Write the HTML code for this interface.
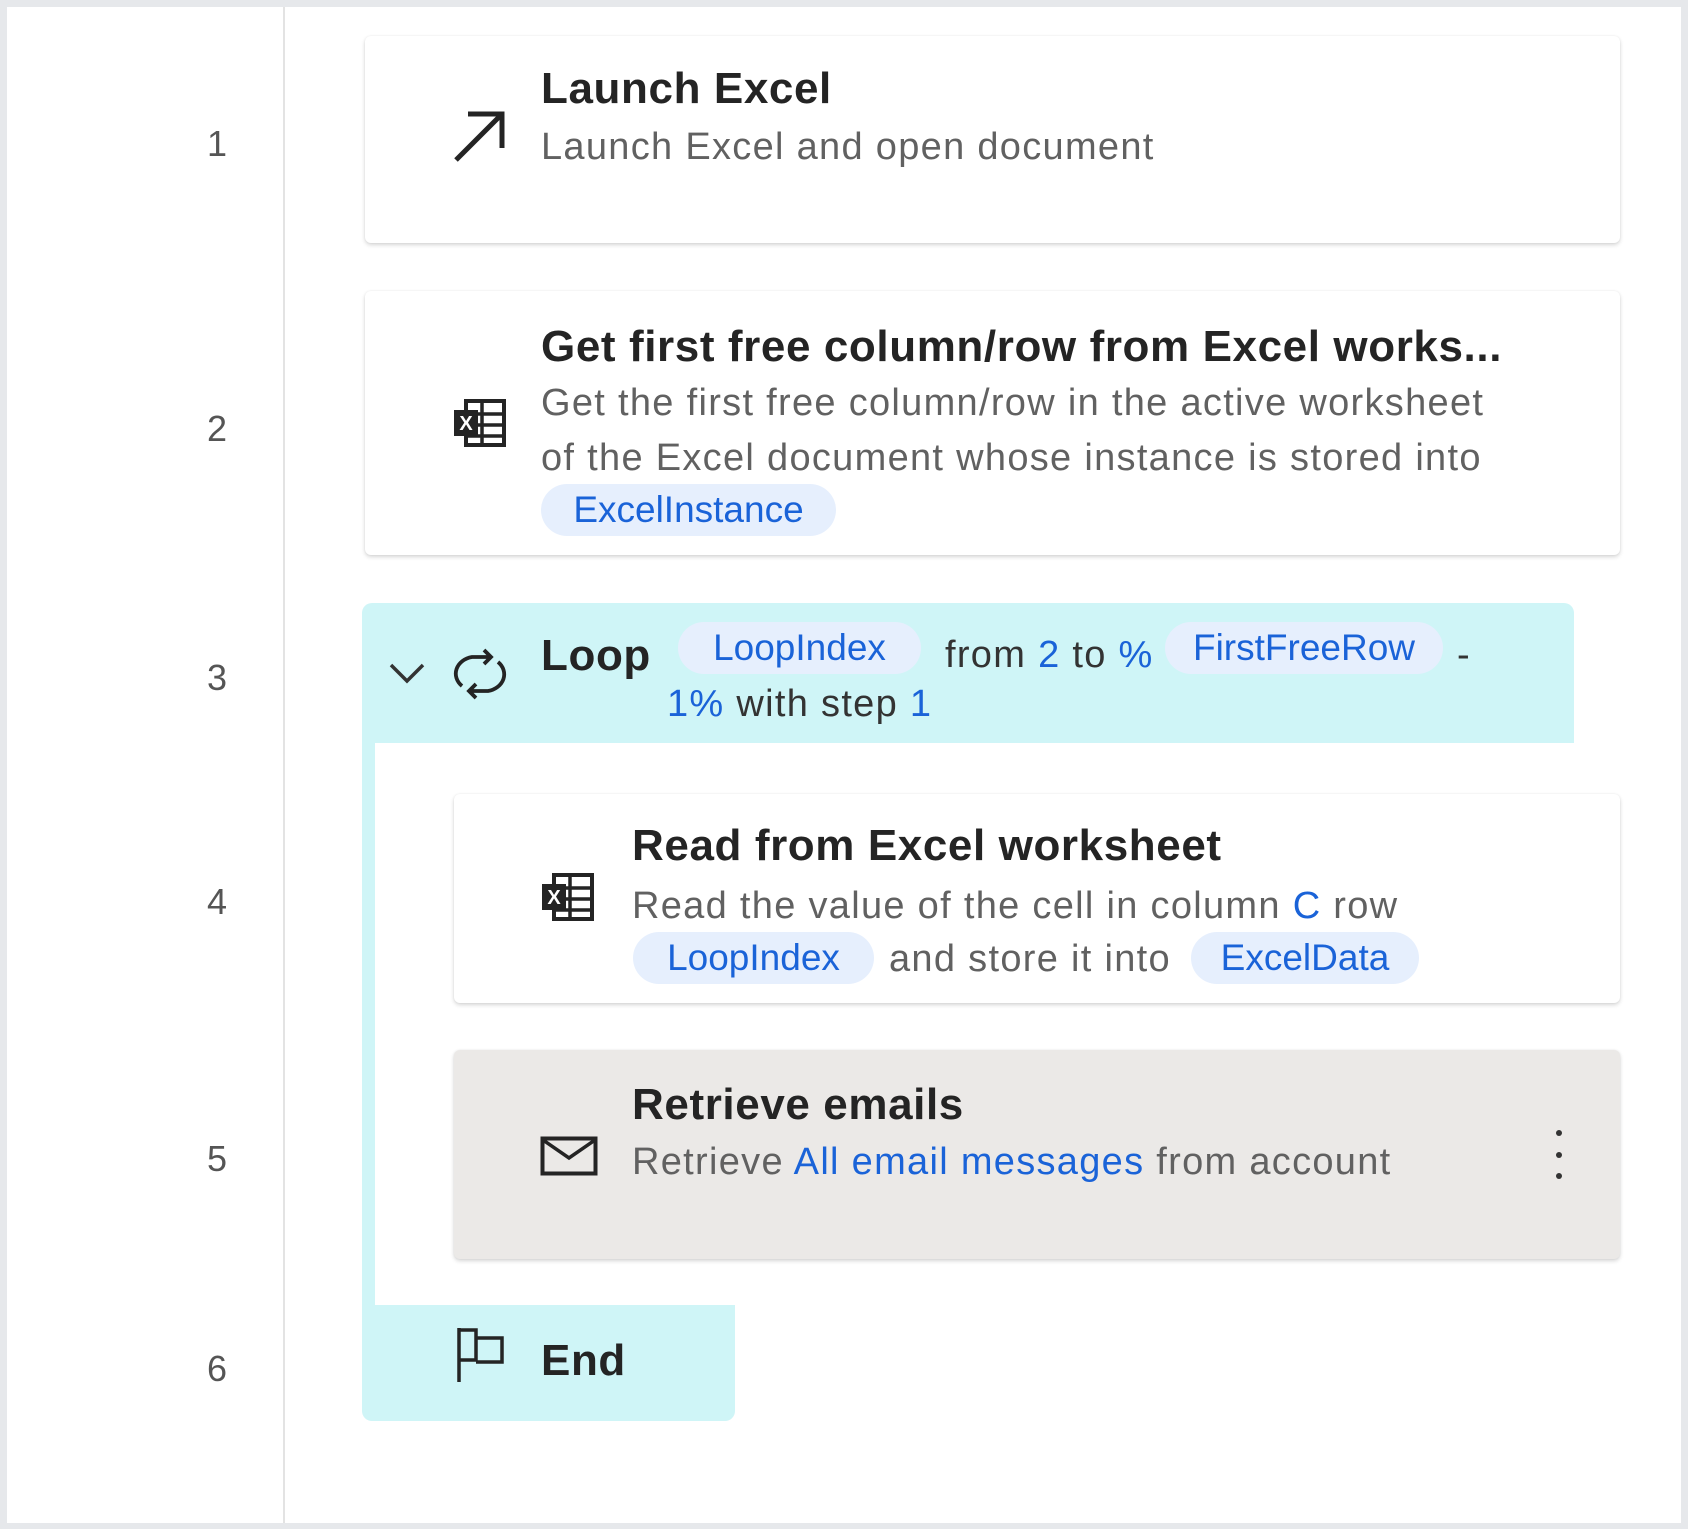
<!DOCTYPE html>
<html><head><meta charset="utf-8"><style>
*{margin:0;padding:0;box-sizing:border-box}
body{width:1688px;height:1529px;background:#e6e8eb;position:relative;overflow:hidden;font-family:"Liberation Sans",sans-serif}
.frame{position:absolute;left:7px;top:7px;width:1674px;height:1516px;background:#fff}
.sep{position:absolute;left:283px;top:7px;width:2px;height:1516px;background:#e3e3e3}
.a{position:absolute;white-space:nowrap}
.num{font-size:36px;line-height:36px;color:#555;width:40px;text-align:center;left:197px}
.card{position:absolute;background:#fff;border-radius:6px;box-shadow:0 2px 4px rgba(0,0,0,.16),0 0 2px rgba(0,0,0,.06)}
.t{font-size:44px;line-height:44px;font-weight:bold;color:#242424;letter-spacing:0.6px}
.d{font-size:38px;line-height:38px;color:#616161;letter-spacing:1.3px}
.b{color:#1a63d8}
.pill{position:absolute;background:#e6effd;border-radius:26px;color:#1a63d8;font-size:37px;line-height:52px;text-align:center}
.loopbg{background:#cff5f7}
</style></head><body>
<div class="frame"></div>
<div class="sep"></div>

<div class="a num" style="top:126px">1</div>
<div class="a num" style="top:411px">2</div>
<div class="a num" style="top:660px">3</div>
<div class="a num" style="top:884px">4</div>
<div class="a num" style="top:1141px">5</div>
<div class="a num" style="top:1351px">6</div>

<!-- card 1 -->
<div class="card" style="left:365px;top:36px;width:1255px;height:207px"></div>
<svg class="a" style="left:452px;top:108px" width="56" height="56" viewBox="0 0 56 56"><path d="M4 52 L50 6 M16 6 H50 V40" fill="none" stroke="#242424" stroke-width="5"/></svg>
<div class="a t" style="left:541px;top:67px">Launch Excel</div>
<div class="a d" style="left:541px;top:128px">Launch Excel and open document</div>

<!-- card 2 -->
<div class="card" style="left:365px;top:291px;width:1255px;height:264px"></div>
<svg class="a" style="left:452px;top:398px" width="56" height="50" viewBox="0 0 56 50"><rect x="14" y="3" width="38" height="44" fill="none" stroke="#242424" stroke-width="4"/><path d="M14 16H52M14 27H52M14 38H52M30 3V47" stroke="#242424" stroke-width="3.5"/><rect x="2" y="12" width="24" height="26" fill="#242424"/><text x="14" y="32" font-size="20" font-weight="bold" fill="#fff" text-anchor="middle" font-family="Liberation Sans">X</text></svg>
<div class="a t" style="left:541px;top:325px">Get first free column/row from Excel works...</div>
<div class="a d" style="left:541px;top:384px">Get the first free column/row in the active worksheet</div>
<div class="a d" style="left:541px;top:439px">of the Excel document whose instance is stored into</div>
<div class="pill" style="left:541px;top:484px;width:295px">ExcelInstance</div>

<!-- loop -->
<div class="a loopbg" style="left:362px;top:603px;width:1212px;height:140px;border-radius:10px 10px 0 0"></div>
<div class="a loopbg" style="left:362px;top:740px;width:13px;height:570px"></div>
<div class="a loopbg" style="left:362px;top:1305px;width:373px;height:116px;border-radius:0 0 10px 10px"></div>
<svg class="a" style="left:388px;top:660px" width="38" height="28" viewBox="0 0 38 28"><path d="M3 5 L19 21 L35 5" fill="none" stroke="#333" stroke-width="3.5"/></svg>
<svg class="a" style="left:450px;top:644px" width="60" height="60" viewBox="0 0 60 60"><path d="M12 42 A20 17 0 0 1 22 13 H40 M34 6 L41 13 L34 20 M48 18 A20 17 0 0 1 38 47 H20 M26 40 L19 47 L26 54" fill="none" stroke="#242424" stroke-width="3.8"/></svg>
<div class="a t" style="left:541px;top:634px">Loop</div>
<div class="pill" style="left:678px;top:622px;width:243px">LoopIndex</div>
<div class="a d" style="left:945px;top:636px;color:#333">from <span class="b">2</span> to <span class="b">%</span></div>
<div class="pill" style="left:1165px;top:622px;width:278px">FirstFreeRow</div>
<div class="a d" style="left:1457px;top:636px;color:#333">-</div>
<div class="a d" style="left:667px;top:685px;color:#333"><span class="b">1%</span> with step <span class="b">1</span></div>

<!-- card 4 -->
<div class="card" style="left:454px;top:794px;width:1166px;height:209px"></div>
<svg class="a" style="left:540px;top:872px" width="56" height="50" viewBox="0 0 56 50"><rect x="14" y="3" width="38" height="44" fill="none" stroke="#242424" stroke-width="4"/><path d="M14 16H52M14 27H52M14 38H52M30 3V47" stroke="#242424" stroke-width="3.5"/><rect x="2" y="12" width="24" height="26" fill="#242424"/><text x="14" y="32" font-size="20" font-weight="bold" fill="#fff" text-anchor="middle" font-family="Liberation Sans">X</text></svg>
<div class="a t" style="left:632px;top:824px">Read from Excel worksheet</div>
<div class="a d" style="left:632px;top:887px">Read the value of the cell in column <span class="b">C</span> row</div>
<div class="pill" style="left:633px;top:932px;width:241px">LoopIndex</div>
<div class="a d" style="left:889px;top:940px">and store it into</div>
<div class="pill" style="left:1191px;top:932px;width:228px">ExcelData</div>

<!-- card 5 -->
<div class="card" style="left:454px;top:1050px;width:1166px;height:209px;background:#ebe9e7"></div>
<svg class="a" style="left:540px;top:1136px" width="58" height="40" viewBox="0 0 58 40"><rect x="2.5" y="2.5" width="53" height="35" fill="none" stroke="#242424" stroke-width="4"/><path d="M3 4 L29 22 L55 4" fill="none" stroke="#242424" stroke-width="3.5"/></svg>
<div class="a t" style="left:632px;top:1083px">Retrieve emails</div>
<div class="a d" style="left:632px;top:1143px">Retrieve <span class="b">All email messages</span> from account</div>
<div class="a" style="left:1556px;top:1130px;width:6px;height:6px;border-radius:3px;background:#333"></div>
<div class="a" style="left:1556px;top:1152px;width:6px;height:6px;border-radius:3px;background:#333"></div>
<div class="a" style="left:1556px;top:1173px;width:6px;height:6px;border-radius:3px;background:#333"></div>

<!-- end -->
<svg class="a" style="left:456px;top:1326px" width="50" height="56" viewBox="0 0 50 56"><path d="M3 2 V56 M3 4 H20 V34 H3 M20 12 H46 V36 H20" fill="none" stroke="#242424" stroke-width="3.5"/></svg>
<div class="a t" style="left:541px;top:1339px">End</div>
</body></html>
